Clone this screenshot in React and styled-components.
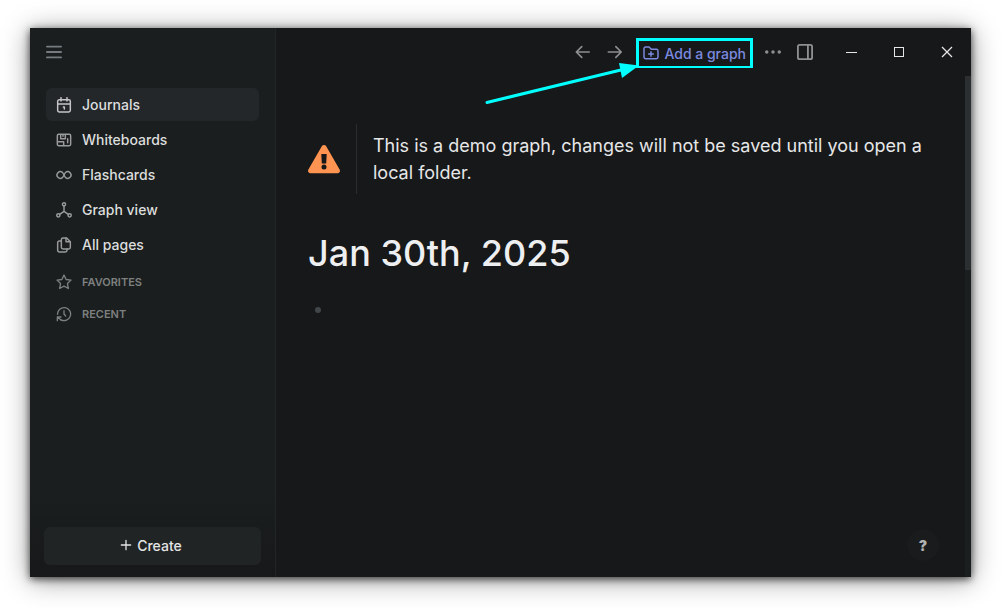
import React from "react";
import styled, { createGlobalStyle } from "styled-components";

const GlobalStyle = createGlobalStyle`
  * {
    box-sizing: border-box;
  }

  body {
    margin: 0;
    background-color: #ffffff;
    font-family: Inter, "Liberation Sans", sans-serif;
  }

  button {
    margin: 0;
    padding: 0;
    border: none;
    background: none;
    color: inherit;
    font-family: inherit;
  }
`;

const Desktop = styled.div`
  display: flex;
  min-height: 100vh;
  padding: 28px 30px 32px;
`;

const Window = styled.div`
  display: flex;
  flex: 1;
  background-color: #171819;
  box-shadow: 0 2px 8px rgba(0, 0, 0, 0.7), 0 3px 26px rgba(0, 0, 0, 0.4);
`;

const Sidebar = styled.aside`
  display: flex;
  flex-direction: column;
  flex: none;
  width: 246px;
  border-right: 1px solid #212526;
  background: linear-gradient(to top, #171819, #1a1e1e 80px);
`;

const SidebarHead = styled.div`
  display: flex;
  align-items: center;
  height: 48px;
  padding-left: 14px;
  color: #757b80;
`;

const MenuButton = styled.button`
  display: flex;
`;

const Nav = styled.nav`
  flex: 1;
  padding: 12px 16px;

  ul {
    display: flex;
    flex-direction: column;
    gap: 2px;
    margin: 0;
    padding: 0;
    list-style: none;
  }
`;

const NavLink = styled.a`
  display: flex;
  align-items: center;
  gap: 10px;
  height: 33px;
  padding: 0 10px;
  border-radius: 6px;
  background-color: ${(props) => (props.$active ? "#232729" : "transparent")};
  color: #dcdddd;
  font-size: 14px;
  font-weight: 500;
  text-decoration: none;

  svg {
    color: ${(props) => (props.$active ? "#c4c5c6" : "#999b9c")};
  }
`;

const Group = styled.h2`
  display: flex;
  align-items: center;
  gap: 10px;
  height: 32px;
  margin: 0;
  padding: 0 10px;
  color: #7e8080;
  font-size: 11px;
  font-weight: 600;
  text-transform: uppercase;
`;

const Groups = styled.div`
  padding-top: 5px;
`;

const CreateBox = styled.div`
  padding: 12px 14px;
`;

const CreateButton = styled.button`
  display: flex;
  align-items: center;
  justify-content: center;
  gap: 4px;
  width: 100%;
  height: 38px;
  padding: 0 4px 2px 0;
  border-radius: 6px;
  background-color: #212425;
  color: #e4e5e5;
  font-size: 14px;
  font-weight: 500;
`;

const Main = styled.main`
  position: relative;
  display: flex;
  flex-direction: column;
  flex: 1;
  min-width: 0;
`;

const Toolbar = styled.header`
  display: flex;
  align-items: center;
  justify-content: flex-end;
  height: 48px;
  color: #8d8f90;
`;

const ToolButton = styled.button`
  display: flex;
  align-items: center;
  justify-content: center;
  width: 32px;
  height: 32px;
`;

const WindowButton = styled(ToolButton)`
  width: 48px;
  height: 48px;
  color: #e6e6e6;
`;

const WindowControls = styled.div`
  display: flex;
  padding-left: 6px;
`;

const AddGraph = styled.div`
  position: relative;
  margin: 2px 4px 0 5px;
`;

const AddGraphButton = styled.button`
  display: flex;
  align-items: center;
  gap: 5px;
  height: 30px;
  padding: 0 4px 1px;
  border: solid #00ffff;
  border-width: 3px 3px 2px;
  color: #7b8be0;
  font-size: 14px;
  font-weight: 500;
  white-space: nowrap;
`;

const Pointer = styled.svg`
  position: absolute;
  top: 22px;
  right: 114px;
  pointer-events: none;
`;

const Body = styled.div`
  display: flex;
  flex: 1;
`;

const Content = styled.div`
  flex: 1;
  padding: 48px 32px 0;
`;

const ScrollTrack = styled.div`
  width: 6px;
  background-color: #1b1e1f;
`;

const ScrollThumb = styled.div`
  height: 194px;
  background-color: #2b2f32;
`;

const Banner = styled.div`
  display: flex;
  align-items: center;
  gap: 16px;

  p {
    flex: 1;
    margin: 0;
    padding: 8px 0 8px 16px;
    border-left: 1px solid #2a2c2e;
    color: #e6e7e8;
    font-size: 18px;
    line-height: 27px;
  }
`;

const Title = styled.h1`
  margin: 36px 0 0;
  color: #eeeff0;
  font-size: 36px;
  font-weight: 500;
  line-height: 46px;
`;

const Blocks = styled.ul`
  margin: 0;
  padding: 31px 7px;
  list-style: none;
`;

const Bullet = styled.li`
  width: 6px;
  height: 6px;
  border-radius: 50%;
  background-color: #434649;
`;

const HelpButton = styled.button`
  position: absolute;
  right: 32px;
  bottom: 16px;
  width: 32px;
  height: 32px;
  border-radius: 50%;
  background-color: #1a1b1c;
  color: #b0b1b1;
  font-size: 14px;
  font-weight: 900;
`;

function Icon({ size = 16, stroke = 2.2, children }) {
  return (
    <svg
      width={size}
      height={size}
      viewBox="0 0 24 24"
      fill="none"
      stroke="currentColor"
      strokeWidth={stroke}
      strokeLinecap="round"
      strokeLinejoin="round"
      aria-hidden="true"
    >
      {children}
    </svg>
  );
}

const links = [
  {
    name: "Journals",
    icon: (
      <>
        <rect x="2.5" y="4" width="19" height="18.5" rx="2.5" />
        <path d="M7.500 1v5M16.500 1v5M3 10.500h18M11 15h1.500v3" />
      </>
    ),
  },
  {
    name: "Whiteboards",
    icon: (
      <>
        <rect x="2" y="3.5" width="20" height="17" rx="2" />
        <path d="M7 4v6h7V4M2.500 14.500h9v5.500M17.500 10v6M10.500 4v2.500" />
      </>
    ),
  },
  {
    name: "Flashcards",
    icon: (
      <path d="M9.8 8.2a5 5 0 1 0 0 7.6C11 14.8 13 9.2 14.2 8.2a5 5 0 1 1 0 7.6C13 14.8 11 9.2 9.8 8.2" />
    ),
  },
  {
    name: "Graph view",
    icon: (
      <>
        <circle cx="12" cy="3.5" r="2.4" />
        <circle cx="3.5" cy="20" r="2.4" />
        <circle cx="20.5" cy="20" r="2.4" />
        <path d="M12 6v8M5.5 18.5L12 14l6.500 4.500" />
      </>
    ),
  },
  {
    name: "All pages",
    icon: (
      <>
        <path d="M15 1.500V7h6.500" />
        <path d="M19 18h-8.500A2.500 2.500 0 0 1 8 15.500V4a2.500 2.500 0 0 1 2.500-2.500H16L21.500 7v8.500A2.500 2.500 0 0 1 19 18z" />
        <path d="M16.500 18v2a2.500 2.500 0 0 1-2.500 2.500H5A2.500 2.500 0 0 1 2.500 20V8.500A2.500 2.500 0 0 1 5 6h3" />
      </>
    ),
  },
];

function App() {
  return (
    <>
      <GlobalStyle />
      <Desktop>
        <Window>
          <Sidebar>
            <SidebarHead>
              <MenuButton aria-label="Toggle left sidebar">
                <Icon size={20}>
                  <path d="M3.5 5.500h17M3.500 12h17M3.500 18.500h17" />
                </Icon>
              </MenuButton>
            </SidebarHead>
            <Nav>
              <ul>
                {links.map((link, i) => (
                  <li key={link.name}>
                    <NavLink href="#" $active={i === 0}>
                      <Icon>{link.icon}</Icon>
                      {link.name}
                    </NavLink>
                  </li>
                ))}
              </ul>
              <Groups>
                <Group>
                  <Icon stroke={2}>
                    <path d="M12 1.500l3.200 6.700 7.300 1-5.300 5.200 1.300 7.400L12 18.300l-6.500 3.500 1.300-7.400L1.500 9.200l7.300-1z" />
                  </Icon>
                  Favorites
                </Group>
                <Group>
                  <Icon stroke={2}>
                    <path d="M2.300 12.500a9.800 9.800 0 1 1 5.200 8.300" />
                    <path d="M2 22v-5.500h5.500M2.500 17l5 4" />
                    <path d="M12 7v5l2.500 3" />
                  </Icon>
                  Recent
                </Group>
              </Groups>
            </Nav>
            <CreateBox>
              <CreateButton>
                <Icon size={14}>
                  <path d="M12 4v16M4 12h16" />
                </Icon>
                Create
              </CreateButton>
            </CreateBox>
          </Sidebar>
          <Main>
            <Toolbar>
              <ToolButton aria-label="Go back">
                <Icon size={20} stroke={2}>
                  <path d="M4 12h15.500M10.500 5.500L4 12l6.500 6.500" />
                </Icon>
              </ToolButton>
              <ToolButton aria-label="Go forward">
                <Icon size={20} stroke={2}>
                  <path d="M4 12h15.500M13 5.500l6.500 6.500-6.500 6.500" />
                </Icon>
              </ToolButton>
              <AddGraph>
                <AddGraphButton>
                  <Icon>
                    <path d="M4 3h5l3.500 3.500H20A2.500 2.500 0 0 1 22.500 9v9a2.500 2.500 0 0 1-2.500 2.500H4A2.500 2.500 0 0 1 1.500 18V5.500A2.500 2.500 0 0 1 4 3z" />
                    <path d="M12 10v7M8.500 13.500h7" />
                  </Icon>
                  Add a graph
                </AddGraphButton>
                <Pointer width="156" height="46" viewBox="0 0 156 46">
                  <path d="M4 42.500L142 9" stroke="#00ffff" strokeWidth="3" strokeLinecap="round" />
                  <path d="M136 3L156 5.500L139 18z" fill="#00ffff" />
                </Pointer>
              </AddGraph>
              <ToolButton aria-label="More">
                <Icon size={20}>
                  <g fill="currentColor" stroke="none">
                    <circle cx="4.5" cy="12" r="2.1" />
                    <circle cx="12" cy="12" r="2.1" />
                    <circle cx="19.5" cy="12" r="2.1" />
                  </g>
                </Icon>
              </ToolButton>
              <ToolButton aria-label="Toggle right sidebar">
                <Icon size={20}>
                  <rect x="3.5" y="3.5" width="17" height="17" rx="2" />
                  <path d="M15.500 3.500v17" />
                </Icon>
              </ToolButton>
              <WindowControls>
                <WindowButton aria-label="Minimize">
                  <svg width="11" height="11">
                    <path d="M0 5.500h11" stroke="currentColor" />
                  </svg>
                </WindowButton>
                <WindowButton aria-label="Maximize">
                  <svg width="10" height="10">
                    <rect x="0.5" y="0.5" width="9" height="9" fill="none" stroke="currentColor" />
                  </svg>
                </WindowButton>
                <WindowButton aria-label="Close">
                  <svg width="12" height="12">
                    <path d="M1 1l10 10M11 1L1 11" stroke="currentColor" strokeWidth="1.3" />
                  </svg>
                </WindowButton>
              </WindowControls>
            </Toolbar>
            <Body>
              <Content>
                <Banner>
                  <svg width="32" height="32" viewBox="0 0 32 32" aria-hidden="true">
                    <path
                      d="M13.8 3.200a2.500 2.500 0 0 1 4.400 0l13.400 23.300a2.500 2.500 0 0 1-2.200 3.800H2.600a2.500 2.500 0 0 1-2.200-3.800z"
                      fill="#ff9351"
                    />
                    <path d="M13.300 11h5.400l-.5 9.500h-4.400z" fill="#171819" />
                    <circle cx="16" cy="24" r="2.5" fill="#171819" />
                  </svg>
                  <p>This is a demo graph, changes will not be saved until you open a local folder.</p>
                </Banner>
                <Title>Jan 30th, 2025</Title>
                <Blocks>
                  <Bullet />
                </Blocks>
              </Content>
              <ScrollTrack>
                <ScrollThumb />
              </ScrollTrack>
            </Body>
            <HelpButton aria-label="Help">?</HelpButton>
          </Main>
        </Window>
      </Desktop>
    </>
  );
}

export default App;
